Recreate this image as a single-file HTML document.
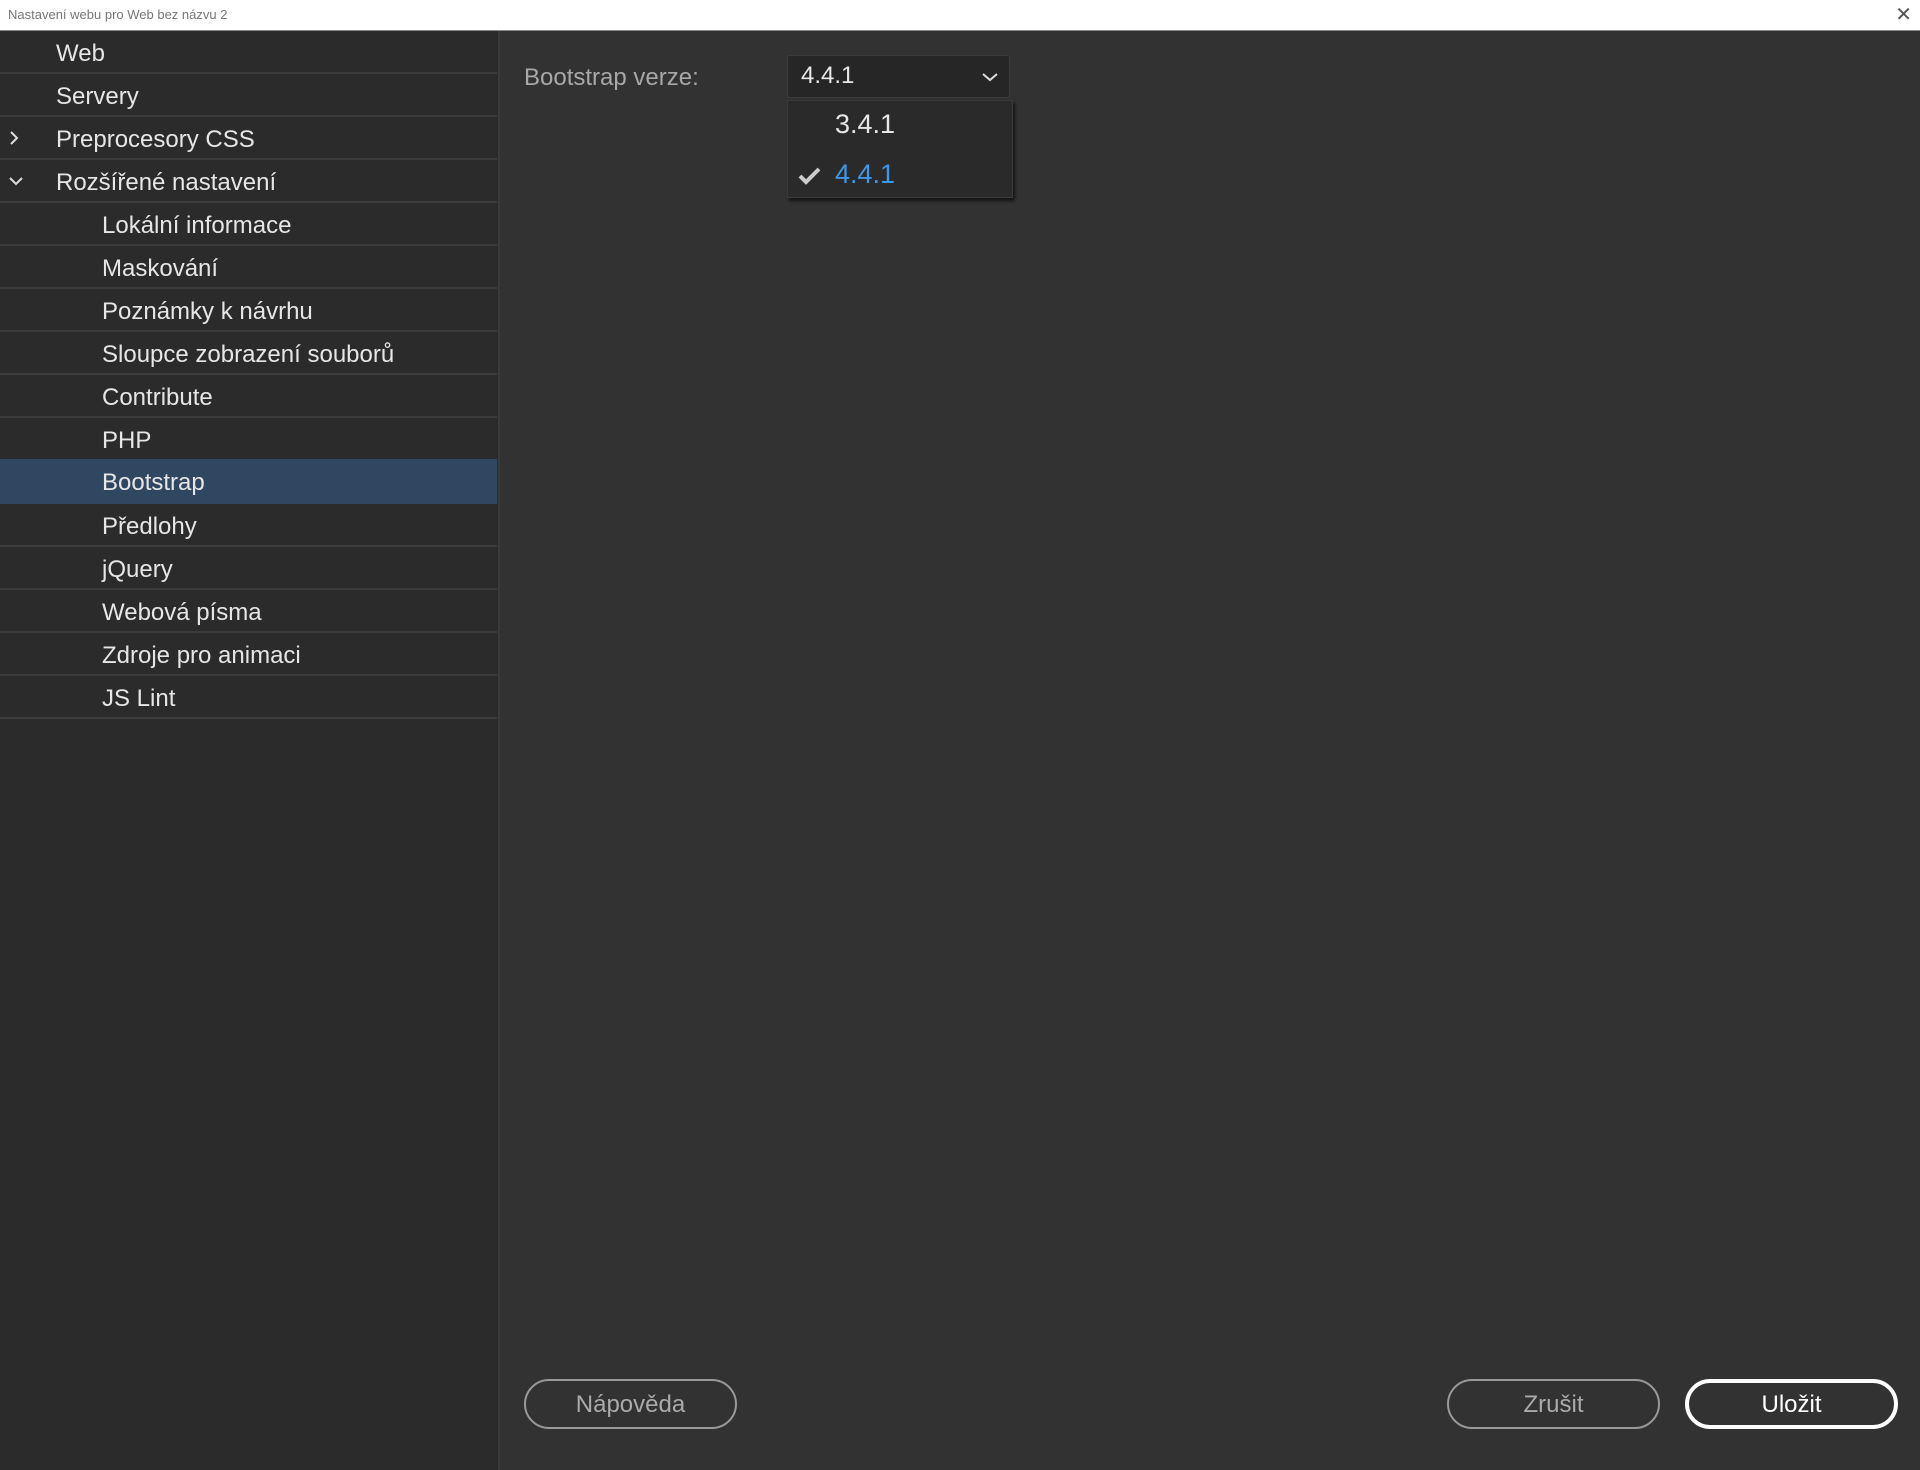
<!DOCTYPE html>
<html><head><meta charset="utf-8"><style>
*{margin:0;padding:0;box-sizing:border-box}
body{width:1920px;height:1470px;background:#323232;font-family:"Liberation Sans",sans-serif;position:relative;overflow:hidden}
.title{position:absolute;left:0;top:0;width:1920px;height:31px;background:#fff;border-bottom:1px solid #888}
.title span{position:absolute;left:8px;top:7px;font-size:13px;color:#777}
.title .x{left:auto;right:8px;top:2px;font-size:20px;color:#555}
.side{position:absolute;left:0;top:31px;width:500px;height:1439px;background:#2b2b2b;border-right:2px solid #3a3a3a}
.row{position:absolute;left:0;width:497px;height:43px;border-bottom:2px solid #3c3c3c;color:#e6e6e6;font-size:24px;line-height:41px}
.row.sel{background:#2f4760}
.row .t{position:absolute;left:56px;top:2px}
.row .t.c{left:102px}
.arr{position:absolute;left:8px;top:0;color:#ddd;font-size:22px}
.lbl{position:absolute;left:524px;top:64px;font-size:24px;color:#a8a8a8}
.dd{position:absolute;left:787px;top:55px;width:223px;height:43px;background:#262626;border:1px solid #3d3d3d;border-radius:3px;color:#e8e8e8;font-size:24px;line-height:40px;padding-left:13px}
.menu{position:absolute;left:787px;top:100px;width:226px;height:98px;background:#2a2a2a;border:1px solid #3b3b3b;box-shadow:2px 3px 3px rgba(0,0,0,.6)}
.mi{position:absolute;left:47px;font-size:27px;color:#e6e6e6}
.btn{position:absolute;top:1379px;height:50px;width:213px;border:2px solid #999;border-radius:25px;color:#aaa;font-size:24px;text-align:center;line-height:48px}
.btn.pri{border:4px solid #fff;color:#fff;line-height:44px}
</style></head><body>
<div class="title"><span>Nastavení webu pro Web bez názvu 2</span><span class="x">✕</span></div>
<div class="side">
<div class="row" style="top:0"><span class="t">Web</span></div>
<div class="row" style="top:43px"><span class="t">Servery</span></div>
<div class="row" style="top:86px"><svg class="arr" style="top:13px" width="12" height="16"><path d="M3 2l6 6-6 6" stroke="#ddd" stroke-width="2" fill="none"/></svg><span class="t">Preprocesory CSS</span></div>
<div class="row" style="top:129px"><svg class="arr" style="top:15px" width="16" height="12"><path d="M2 3l6 6 6-6" stroke="#ddd" stroke-width="2" fill="none"/></svg><span class="t">Rozšířené nastavení</span></div>
<div class="row" style="top:172px"><span class="t c">Lokální informace</span></div>
<div class="row" style="top:215px"><span class="t c">Maskování</span></div>
<div class="row" style="top:258px"><span class="t c">Poznámky k návrhu</span></div>
<div class="row" style="top:301px"><span class="t c">Sloupce zobrazení souborů</span></div>
<div class="row" style="top:344px"><span class="t c">Contribute</span></div>
<div class="row" style="top:387px"><span class="t c">PHP</span></div>
<div class="row sel" style="top:428px;height:45px;border-bottom:none"><span class="t c" style="top:3px">Bootstrap</span></div>
<div class="row" style="top:473px"><span class="t c">Předlohy</span></div>
<div class="row" style="top:516px"><span class="t c">jQuery</span></div>
<div class="row" style="top:559px"><span class="t c">Webová písma</span></div>
<div class="row" style="top:602px"><span class="t c">Zdroje pro animaci</span></div>
<div class="row" style="top:645px"><span class="t c">JS Lint</span></div>
</div>
<div class="lbl">Bootstrap verze:</div>
<div class="dd">4.4.1<svg style="position:absolute;right:10px;top:15px" width="18" height="12"><path d="M2 3l7 6 7-6" stroke="#ddd" stroke-width="2" fill="none"/></svg></div>
<div class="menu">
<div class="mi" style="top:8px">3.4.1</div>
<svg style="position:absolute;left:9px;top:65px" width="26" height="20"><path d="M3 10l6 6 13-13" stroke="#ccc" stroke-width="4" fill="none"/></svg>
<div class="mi" style="top:58px;color:#3d97e8">4.4.1</div>
</div>
<div class="btn" style="left:524px">Nápověda</div>
<div class="btn" style="left:1447px">Zrušit</div>
<div class="btn pri" style="left:1685px">Uložit</div>
</body></html>
